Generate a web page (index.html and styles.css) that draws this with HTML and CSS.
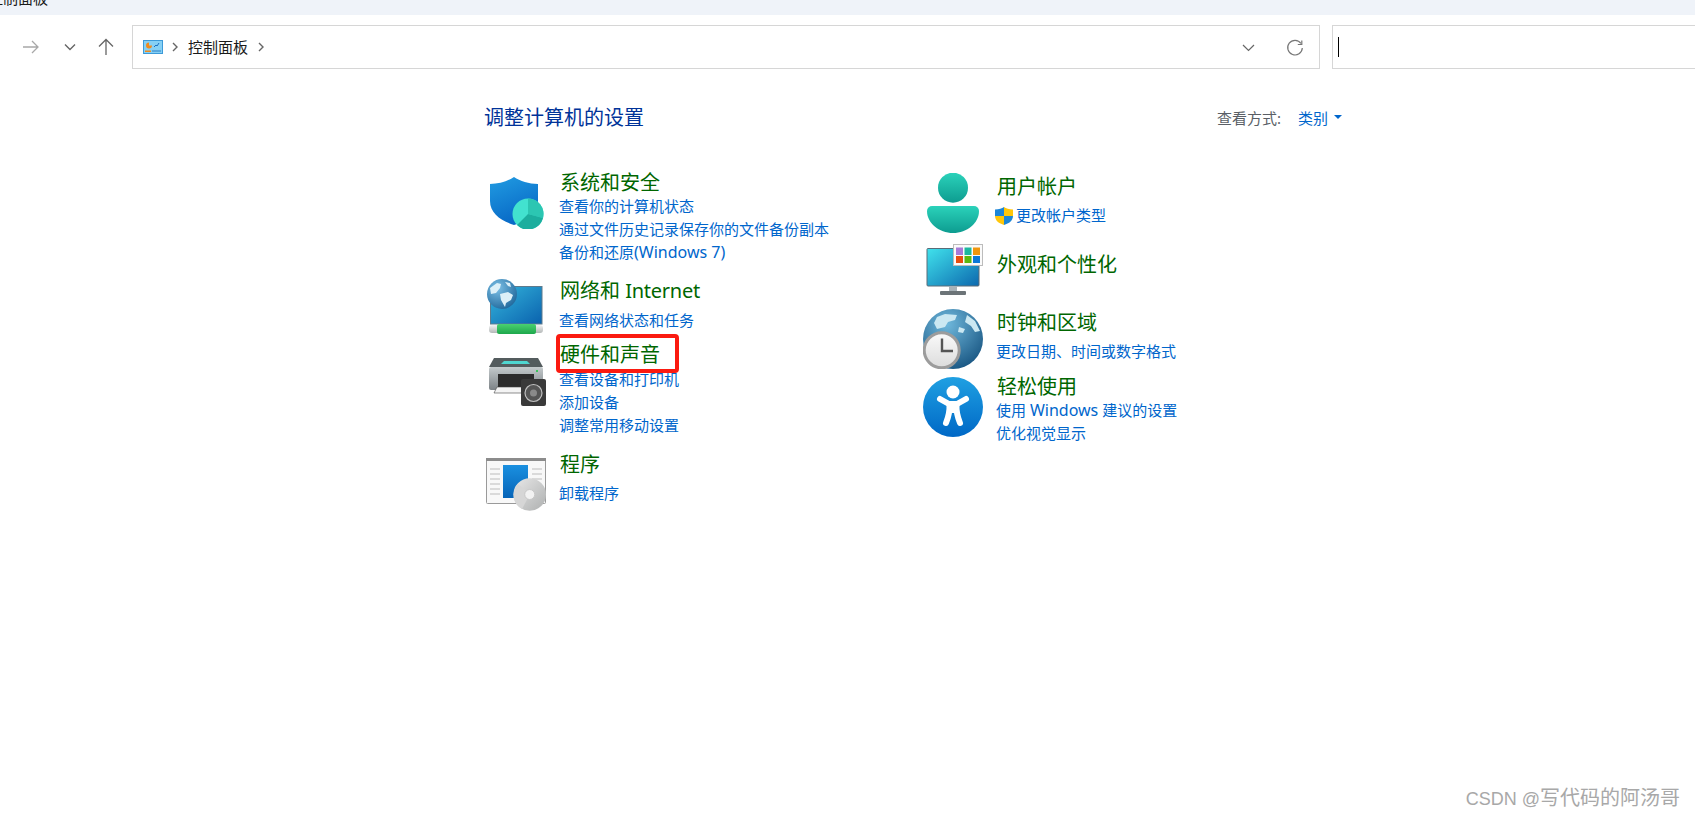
FILE: index.html
```html
<!DOCTYPE html>
<html lang="zh-CN">

<head>
    <meta charset="UTF-8">
    <title>控制面板</title>

    <link rel="stylesheet" href="styles.css">
</head>

<body>
    <div class="titlebar"><span>控制面板</span></div>

    <nav class="toolbar">
        <div class="nav-buttons">
            <svg class="nav-back" width="18" height="16" viewBox="0 0 18 16"><path d="M1 8H16M10 2l6 6-6 6" fill="none" stroke="#a8a8a8" stroke-width="1.3"/></svg>
            <svg class="nav-down" width="12" height="8" viewBox="0 0 12 8"><path d="M1 1.5l5 5 5-5" fill="none" stroke="#666" stroke-width="1.4"/></svg>
            <svg class="nav-up" width="16" height="18" viewBox="0 0 16 18"><path d="M8 17V2M1 8.5L8 1.5l7 7" fill="none" stroke="#666" stroke-width="1.3"/></svg>
        </div>
        <div class="address">
            <svg class="address-icon" width="20" height="14" viewBox="0 0 20 14">
                <rect x=".5" y=".5" width="19" height="13" fill="#86d0f4" stroke="#3d9ad8"/>
                <path d="M6 2.5a3 3 0 1 0 3 3H6z" fill="#f08a1c"/>
                <path d="M11 7l2-2 1 1 2-3" fill="none" stroke="#1c70c0"/>
                <rect x="2" y="10.5" width="6" height="1.5" fill="#f08a1c"/>
                <rect x="9" y="10.5" width="9" height="1" fill="#2a80c8"/>
            </svg>
            <svg class="crumb-arrow" width="6" height="10" viewBox="0 0 6 10"><path d="M1 1l4 4-4 4" fill="none" stroke="#666" stroke-width="1.4"/></svg>
            <span class="crumb">控制面板</span>
            <svg class="crumb-arrow" width="6" height="10" viewBox="0 0 6 10"><path d="M1 1l4 4-4 4" fill="none" stroke="#666" stroke-width="1.4"/></svg>
            <svg class="address-drop" width="13" height="8" viewBox="0 0 13 8"><path d="M1 1l5.500 5.500L12 1" fill="none" stroke="#666" stroke-width="1.2"/></svg>
            <svg class="address-refresh" width="18" height="18" viewBox="0 0 18 18"><path d="M15 4.500A7.300 7.300 0 1 0 16.300 9" fill="none" stroke="#777" stroke-width="1.2"/><path d="M15.800 1.500V5.500H11.800" fill="none" stroke="#777" stroke-width="1.2"/></svg>
        </div>
        <div class="search"><i class="caret"></i></div>
    </nav>

    <main class="panel">
        <header class="panel-head">
            <h1>调整计算机的设置</h1>
            <div class="view-by">
                <span>查看方式:</span>
                <a class="view-link">类别</a>
                <i class="view-arrow"></i>
            </div>
        </header>

        <div class="columns">
            <section class="col">
                <article class="cat cat-system">
                    <div class="cat-icon">
                        <svg width="60" height="52" viewBox="0 0 60 52">
                            <defs>
                                <linearGradient id="shieldBlue" x1="0" y1="0" x2="0.4" y2="1"><stop offset="0" stop-color="#219ce2"/><stop offset="1" stop-color="#0869c6"/></linearGradient>
                            </defs>
                            <path d="M27 0C33 4 42 7 51 7V24C51 36 40 44 27 48C14 44 3 36 3 24V7C12 7 21 4 27 0Z" fill="url(#shieldBlue)"/>
                            <circle cx="41" cy="37" r="15.500" fill="#42e2cf"/>
                            <path d="M41 37V21.500A15.500 15.500 0 0 1 56 41z" fill="#2cc6b2"/>
                            <path d="M41 37L56 41A15.500 15.500 0 0 1 30 48z" fill="#1cae9e"/>
                        </svg>
                    </div>
                    <div class="cat-body">
                        <h2>系统和安全</h2>
                        <ul class="links tighter">
                            <li><a>查看你的计算机状态</a></li>
                            <li><a>通过文件历史记录保存你的文件备份副本</a></li>
                            <li><a>备份和还原<span class="latin">(Windows 7)</span></a></li>
                        </ul>
                    </div>
                </article>

                <article class="cat cat-network">
                    <div class="cat-icon">
                        <svg width="60" height="56" viewBox="0 0 60 56">
                            <defs>
                                <linearGradient id="netScreen" x1="0" y1="0" x2="1" y2="1"><stop offset="0" stop-color="#35b6dc"/><stop offset="1" stop-color="#0a62ae"/></linearGradient>
                                <radialGradient id="netGlobe" cx="0.35" cy="0.3" r="0.8"><stop offset="0" stop-color="#7cc0e6"/><stop offset="1" stop-color="#1c6498"/></radialGradient>
                                <linearGradient id="netCap" x1="0" y1="0" x2="0" y2="1"><stop offset="0" stop-color="#f2f2f2"/><stop offset="1" stop-color="#b4b8b8"/></linearGradient>
                                <linearGradient id="netBar" x1="0" y1="0" x2="0" y2="1"><stop offset="0" stop-color="#4ad070"/><stop offset="1" stop-color="#1ea84c"/></linearGradient>
                            </defs>
                            <rect x="4.500" y="7.500" width="51.500" height="37.500" fill="url(#netScreen)" stroke="#5f7a8c"/>
                            <rect x="3" y="46" width="54" height="8" rx="3" fill="url(#netCap)"/>
                            <rect x="11" y="45" width="39" height="10" rx="2" fill="url(#netBar)"/>
                            <circle cx="16" cy="15" r="15" fill="url(#netGlobe)"/>
                            <path d="M4 9l7-5 4 1-1 4-4 5-5 1zM14 15l8-2 5 3-2 5-5 3-1 4-4-7zM19 3l5 1 1 4-3-1z" fill="#dcf0f8"/>
                        </svg>
                    </div>
                    <div class="cat-body">
                        <h2>网络和 <span class="latin-title">Internet</span></h2>
                        <ul class="links">
                            <li><a>查看网络状态和任务</a></li>
                        </ul>
                    </div>
                </article>

                <article class="cat cat-hardware">
                    <div class="cat-icon">
                        <svg width="60" height="48" viewBox="0 0 60 48">
                            <defs>
                                <linearGradient id="printBody" x1="0" y1="0" x2="0" y2="1"><stop offset="0" stop-color="#c4cacc"/><stop offset="1" stop-color="#7c8286"/></linearGradient>
                            </defs>
                            <path d="M8 0H52L57 9H3z" fill="#545c5e"/>
                            <path d="M18 3H41L44 6H15z" fill="#4fd6d0"/>
                            <rect x="3" y="9" width="54" height="23" rx="2" fill="url(#printBody)"/>
                            <rect x="12" y="16" width="36" height="13" fill="#2c2c2c"/>
                            <rect x="50" y="12" width="2" height="2" fill="#3bc45c"/>
                            <path d="M11 29H36V35H8z" fill="#f4f4f4" stroke="#444" stroke-width=".6"/>
                            <rect x="35" y="21" width="25" height="27" rx="2" fill="#3a3a3a"/>
                            <circle cx="47.500" cy="35" r="8.500" fill="#555" stroke="#c0c0c0" stroke-width="1.200"/>
                            <circle cx="47.500" cy="35" r="3.500" fill="#8a8a8a"/>
                        </svg>
                    </div>
                    <div class="cat-body">
                        <div class="marked">
                            <h2>硬件和声音</h2>
                            <span class="red-box"></span>
                        </div>
                        <ul class="links tight">
                            <li><a>查看设备和打印机</a></li>
                            <li><a>添加设备</a></li>
                            <li><a>调整常用移动设置</a></li>
                        </ul>
                    </div>
                </article>

                <article class="cat cat-programs">
                    <div class="cat-icon">
                        <svg width="60" height="53" viewBox="0 0 60 53">
                            <defs>
                                <linearGradient id="progBlue" x1="0" y1="0" x2="0" y2="1"><stop offset="0" stop-color="#1a90e0"/><stop offset="1" stop-color="#0664b8"/></linearGradient>
                                <linearGradient id="discGrey" x1="0" y1="0" x2="1" y2="1"><stop offset="0" stop-color="#e8e8e8"/><stop offset="1" stop-color="#aeb0b0"/></linearGradient>
                            </defs>
                            <rect x=".5" y=".5" width="59" height="45" rx="1" fill="#f8f8f8" stroke="#9a9a9a"/>
                            <rect x="0" y="0" width="60" height="3" fill="#8c8c8c"/>
                            <rect x="17" y="7" width="25" height="33" fill="url(#progBlue)"/>
                            <path d="M4 11H14M4 16H14M4 21H14M4 26H14M4 31H14M4 36H14M46 11H56M46 16H56M46 21H56" stroke="#d0d0d0" stroke-width="1.300"/>
                            <circle cx="43.700" cy="36.500" r="16.300" fill="url(#discGrey)"/>
                            <path d="M32 26L44 36L36 51A16 16 0 0 1 32 26z" fill="#d6d6d6"/>
                            <circle cx="43.700" cy="36.500" r="5" fill="#f2f2f2" stroke="#c8c8c8"/>
                        </svg>
                    </div>
                    <div class="cat-body">
                        <h2>程序</h2>
                        <ul class="links snug">
                            <li><a>卸载程序</a></li>
                        </ul>
                    </div>
                </article>
            </section>

            <section class="col col-right">
                <article class="cat cat-users">
                    <div class="cat-icon">
                        <svg width="60" height="60" viewBox="0 0 60 60">
                            <defs>
                                <linearGradient id="userTeal" x1="0" y1="0" x2="0" y2="1"><stop offset="0" stop-color="#2bd2ba"/><stop offset="1" stop-color="#0d9c90"/></linearGradient>
                            </defs>
                            <circle cx="30" cy="14.700" r="15" fill="url(#userTeal)"/>
                            <path d="M9 33H51a5 5 0 0 1 5 5C56 50 44 60 30 60S4 50 4 38a5 5 0 0 1 5-5Z" fill="url(#userTeal)"/>
                        </svg>
                    </div>
                    <div class="cat-body">
                        <h2>用户帐户</h2>
                        <ul class="links snug">
                            <li class="with-shield">
                                <svg class="uac" width="18" height="18" viewBox="0 0 18 18">
                                    <path d="M9 0C11 1.500 14 2.500 18 2.500V9H9z" fill="#ffc60a"/>
                                    <path d="M9 0C7 1.500 4 2.500 0 2.500V9H9z" fill="#1c86d8"/>
                                    <path d="M0 9H9V18C4 16.500 0 13.500 0 9z" fill="#ffc60a"/>
                                    <path d="M18 9H9V18C14 16.500 18 13.500 18 9z" fill="#1c86d8"/>
                                </svg>
                                <a>更改帐户类型</a>
                            </li>
                        </ul>
                    </div>
                </article>

                <article class="cat cat-look">
                    <div class="cat-icon">
                        <svg width="60" height="51" viewBox="0 0 60 51">
                            <defs>
                                <linearGradient id="lookScreen" x1="0" y1="0" x2="1" y2="1"><stop offset="0" stop-color="#40e2ec"/><stop offset="1" stop-color="#0c68ae"/></linearGradient>
                            </defs>
                            <rect x="4" y="4.500" width="52" height="37.500" rx="1" fill="url(#lookScreen)" stroke="#5a6c78"/>
                            <rect x="26" y="42" width="8" height="6" fill="#a8b2b8"/>
                            <rect x="17" y="47" width="26" height="4" rx="1" fill="#6c7478"/>
                            <rect x="30.500" y=".5" width="29" height="21" fill="#fafafa" stroke="#bcbcbc"/>
                            <rect x="33" y="3.500" width="7" height="7.500" fill="#a87ad8"/>
                            <rect x="41.500" y="3.500" width="7" height="7.500" fill="#1cb8a0"/>
                            <rect x="50" y="3.500" width="7" height="7.500" fill="#f0960e"/>
                            <rect x="33" y="12" width="7" height="7" fill="#e84e0f"/>
                            <rect x="41.500" y="12" width="7" height="7" fill="#5cb80f"/>
                            <rect x="50" y="12" width="7" height="7" fill="#0a78d8"/>
                        </svg>
                    </div>
                    <div class="cat-body">
                        <h2>外观和个性化</h2>
                    </div>
                </article>

                <article class="cat cat-clock">
                    <div class="cat-icon">
                        <svg width="60" height="60" viewBox="0 0 60 60">
                            <defs>
                                <radialGradient id="clockGlobe" cx="0.4" cy="0.25" r="0.85"><stop offset="0" stop-color="#6fb8dc"/><stop offset="1" stop-color="#134f7c"/></radialGradient>
                                <linearGradient id="clockFace" x1="0" y1="0" x2="0" y2="1"><stop offset="0" stop-color="#fafafa"/><stop offset="1" stop-color="#dcdcdc"/></linearGradient>
                            </defs>
                            <circle cx="30" cy="30" r="30" fill="url(#clockGlobe)"/>
                            <path d="M14 8l8-3 12 1-2 5-7 2-3 5-8 2-3-6zM44 6l8 6 5 10-5 1-4-6-6-4zM36 18l6 2-2 4-5-1z" fill="#cbe8f2"/>
                            <circle cx="18.700" cy="41.300" r="17.500" fill="url(#clockFace)" stroke="#9c9c9c" stroke-width="3"/>
                            <path d="M19 29.500V42H30" fill="none" stroke="#555" stroke-width="2.400"/>
                        </svg>
                    </div>
                    <div class="cat-body">
                        <h2>时钟和区域</h2>
                        <ul class="links snug">
                            <li><a>更改日期、时间或数字格式</a></li>
                        </ul>
                    </div>
                </article>

                <article class="cat cat-access">
                    <div class="cat-icon">
                        <svg width="60" height="60" viewBox="0 0 60 60">
                            <defs>
                                <linearGradient id="accessBlue" x1="0" y1="0" x2="0" y2="1"><stop offset="0" stop-color="#1fa0e2"/><stop offset="1" stop-color="#0068c6"/></linearGradient>
                            </defs>
                            <circle cx="30" cy="30" r="30" fill="url(#accessBlue)"/>
                            <circle cx="30" cy="15" r="6.500" fill="#fff"/>
                            <path d="M17 22L26 27H34L43 22" fill="none" stroke="#fff" stroke-width="6" stroke-linecap="round" stroke-linejoin="round"/>
                            <path d="M26.500 28C27 36 25 41 23 46M33.500 28C33 36 35 41 37 46" fill="none" stroke="#fff" stroke-width="6" stroke-linecap="round"/>
                            <rect x="26" y="26" width="8" height="10" fill="#fff"/>
                        </svg>
                    </div>
                    <div class="cat-body">
                        <h2>轻松使用</h2>
                        <ul class="links tighter">
                            <li><a>使用 <span class="latin">Windows</span> 建议的设置</a></li>
                            <li><a>优化视觉显示</a></li>
                        </ul>
                    </div>
                </article>
            </section>
        </div>
    </main>

    <div class="watermark"><span class="mark-latin">CSDN @</span>写代码的阿汤哥</div>
</body></html>
```

FILE: styles.css
```css
html,
body {
    margin: 0;
    height: 100%;
    overflow: hidden;
    background: #fff;
}

body {
    position: relative;
    font-family: "Noto Sans", "Noto Sans CJK SC", sans-serif;
    color: #1a1a1a;
}

svg {
    display: block;
}

.titlebar {
    height: 15px;
    overflow: hidden;
    background: #eff3f9;
}

.titlebar span {
    display: block;
    margin: -11px 0 0 -12px;
    font-size: 15px;
    line-height: 18px;
}

/* toolbar */
.toolbar {
    display: flex;
    height: 44px;
    margin-top: 10px;
    overflow: hidden;
}

.nav-buttons {
    flex: 0 0 132px;
    display: flex;
    align-items: center;
}

.nav-back {
    margin-left: 22px;
}

.nav-down {
    margin-left: 24px;
}

.nav-up {
    margin-left: 22px;
}

.address {
    flex: 0 0 1188px;
    box-sizing: border-box;
    display: flex;
    align-items: center;
    border: 1px solid #d6d6d6;
    font-size: 15px;
}

.address-icon {
    margin-left: 10px;
}

.crumb-arrow {
    margin-left: 9px;
}

.crumb {
    margin-left: 10px;
    line-height: 22px;
}

.crumb + .crumb-arrow {
    margin-left: 10px;
}

.address-drop {
    margin: 2px 0 0 auto;
}

.address-refresh {
    margin: 2px 15px 0 31px;
}

.search {
    flex: 1;
    margin-left: 12px;
    border: 1px solid #d6d6d6;
    border-right: 0;
    display: flex;
    align-items: center;
}

.caret {
    width: 1px;
    height: 20px;
    margin-left: 5px;
    background: #000;
}

/* content */
.panel {
    width: 856px;
    margin: 35px 0 0 486px;
}

.panel-head {
    display: flex;
    justify-content: space-between;
    align-items: center;
    height: 28px;
}

.panel-head h1 {
    margin: 0 0 0 -2px;
    font-size: 20px;
    font-weight: 400;
    line-height: 28px;
    color: #003399;
}

.view-by {
    display: flex;
    align-items: center;
    margin-top: -2px;
    font-size: 15px;
    color: #5a5f66;
}

.view-link {
    margin-left: 17px;
    color: #0066cc;
}

.view-arrow {
    width: 0;
    height: 0;
    margin-left: 6px;
    border: 4px solid transparent;
    border-top: 4px solid #0066cc;
    border-bottom: 0;
}

.columns {
    display: grid;
    grid-template-columns: 437px 1fr;
    margin-top: 37px;
}

.col-right {
    padding-top: 4px;
}

.cat {
    display: flex;
}

.cat-icon {
    flex: 0 0 74px;
    height: 0;
}

.cat-body {
    flex: 1;
}

.cat-body h2 {
    margin: 0;
    font-size: 20px;
    font-weight: 400;
    line-height: 28px;
    color: #006600;
}

.latin-title {
    letter-spacing: -0.25px;
}

.links {
    margin: 4px 0 0 -1px;
    padding: 0;
    list-style: none;
    font-size: 15px;
    line-height: 23px;
    color: #0066cc;
}

.links.snug {
    margin-top: 3px;
}

.links.tight {
    margin-top: -1px;
}

.links.tighter {
    margin-top: -2px;
}

.latin {
    font-size: 16px;
}

.with-shield {
    display: flex;
    align-items: center;
    margin-left: -1px;
}

.uac {
    margin-right: 3px;
}

.marked {
    position: relative;
}

.red-box {
    position: absolute;
    left: -4px;
    top: -7px;
    width: 115px;
    height: 31px;
    border: 4px solid #fb1a10;
    border-radius: 4px;
}

/* place of each category and its icon */
.cat-network {
    margin-top: 13px;
}

.cat-hardware {
    margin-top: 9px;
}

.cat-programs {
    margin-top: 14px;
}

.cat-system svg:first-child {
    margin: 8px 0 0 1px;
}

.cat-network svg:first-child {
    margin-top: 2px;
}

.cat-hardware svg:first-child {
    margin-top: 17px;
}

.cat-programs svg:first-child {
    margin-top: 7px;
}

.cat-look {
    margin-top: 24px;
}

.cat-clock {
    margin-top: 30px;
}

.cat-access {
    margin-top: 10px;
}

.cat-users svg:first-child,
.cat-clock svg:first-child {
    margin-top: 0;
}

.cat-look svg:first-child {
    margin-top: -7px;
}

.cat-access svg:first-child {
    margin-top: 4px;
}

.watermark {
    position: absolute;
    right: 15px;
    bottom: 4px;
    font-family: "Liberation Sans", "Noto Sans CJK SC", sans-serif;
    font-size: 20px;
    line-height: 28px;
    color: #a8a8a8;
}

.mark-latin {
    font-size: 18px;
}
```
